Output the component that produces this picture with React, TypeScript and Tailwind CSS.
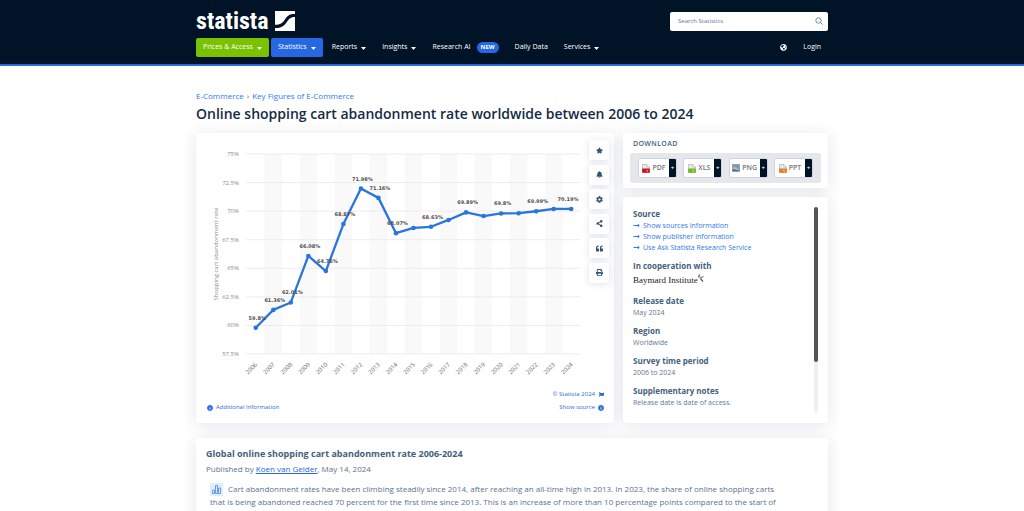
import React from "react";
import {
	FaBell,
	FaCog,
	FaFlag,
	FaGlobeAmericas,
	FaInfoCircle,
	FaLongArrowAltRight,
	FaPrint,
	FaQuoteLeft,
	FaShareAlt,
	FaStar,
} from "react-icons/fa";

interface DataPoint {
	year: number;
	value: number;
	label?: string;
}

const data: DataPoint[] = [
	{ year: 2006, value: 59.8, label: "59.8%" },
	{ year: 2007, value: 61.36, label: "61.36%" },
	{ year: 2008, value: 62.01, label: "62.01%" },
	{ year: 2009, value: 66.08, label: "66.08%" },
	{ year: 2010, value: 64.76, label: "64.76%" },
	{ year: 2011, value: 68.87, label: "68.87%" },
	{ year: 2012, value: 71.98, label: "71.98%" },
	{ year: 2013, value: 71.16, label: "71.16%" },
	{ year: 2014, value: 68.07, label: "68.07%" },
	{ year: 2015, value: 68.53 },
	{ year: 2016, value: 68.63, label: "68.63%" },
	{ year: 2017, value: 69.23 },
	{ year: 2018, value: 69.89, label: "69.89%" },
	{ year: 2019, value: 69.57 },
	{ year: 2020, value: 69.8, label: "69.8%" },
	{ year: 2021, value: 69.82 },
	{ year: 2022, value: 69.99, label: "69.99%" },
	{ year: 2023, value: 70.19 },
	{ year: 2024, value: 70.19, label: "70.19%" },
];

const ticks = [75, 72.5, 70, 67.5, 65, 62.5, 60, 57.5];

const LEFT = 51;
const RIGHT = 384;
const TOP = 21;
const BOTTOM = 221;
const STEP = (RIGHT - LEFT) / data.length;

const xAt = (index: number) => LEFT + STEP * (index + 0.5);
const yAt = (value: number) => TOP + ((75 - value) / 17.5) * (BOTTOM - TOP);

const card = "rounded-[3px] bg-white shadow-[0_2px_16px_rgba(20,40,90,0.12)]";

const Chart: React.FC = () => (
	<svg
		viewBox="0 0 385 248"
		className="block w-full"
		role="img"
		aria-label="Shopping cart abandonment rate by year">
		{data.map((d, i) =>
			i % 2 === 1 ? (
				<rect
					key={d.year}
					x={LEFT + STEP * i}
					y={TOP}
					width={STEP}
					height={BOTTOM - TOP}
					fill="#f9f9f9"
				/>
			) : null,
		)}
		{ticks.map((t) => (
			<g key={t}>
				<line
					x1={LEFT - 1}
					x2={RIGHT}
					y1={yAt(t)}
					y2={yAt(t)}
					stroke="#ececec"
				/>
				<text
					x={43}
					y={yAt(t) + 2}
					textAnchor="end"
					className="fill-[#8c8c8c] text-[6px]">
					{t}%
				</text>
			</g>
		))}
		<text
			transform="translate(22 121) rotate(-90)"
			textAnchor="middle"
			className="fill-[#8c8c8c] text-[6px]">
			Shopping cart abandonment rate
		</text>
		{data.map((d, i) => (
			<text
				key={d.year}
				transform={`translate(${xAt(i) + 2} 232) rotate(-45)`}
				textAnchor="end"
				className="fill-[#6c6c6c] text-[6px]">
				{d.year}
			</text>
		))}
		<polyline
			points={data.map((d, i) => `${xAt(i)},${yAt(d.value)}`).join(" ")}
			fill="none"
			stroke="#2875dd"
			strokeWidth={2.3}
			strokeLinejoin="round"
		/>
		{data.map((d, i) => (
			<circle
				key={d.year}
				cx={xAt(i)}
				cy={yAt(d.value)}
				r={2.3}
				fill="#2875dd"
			/>
		))}
		{data.map((d, i) =>
			d.label ? (
				<text
					key={d.year}
					x={Math.min(xAt(i) + 1.5, RIGHT - 12)}
					y={yAt(d.value) - 8}
					textAnchor="middle"
					className="fill-[#505050] font-['DejaVu_Sans'] text-[5px] font-bold">
					{d.label}
				</text>
			) : null,
		)}
	</svg>
);

const Logo: React.FC = () => (
	<a
		href="#"
		aria-label="statista"
		className="flex h-5 items-center gap-[6px] text-white">
		<span className="font-['Liberation_Sans_Narrow','Roboto_Condensed','Noto_Sans_Condensed',Roboto,sans-serif] text-[24px] leading-5 font-bold">
			statista
		</span>
		<svg viewBox="0 0 20 20" className="size-5">
			<path
				fill="currentColor"
				d="M0 0H20V3C14 3 12.300 5 9.700 8.800C7.500 12.100 5.500 13.800 0 13.800Z"
			/>
			<path
				fill="currentColor"
				d="M20 6V20H0V17C6.500 17 9 15 11.800 11C14.300 7.400 16 6 20 6Z"
			/>
		</svg>
	</a>
);

const Caret: React.FC = () => (
	<svg viewBox="0 0 5 3" className="mt-px h-[3px] w-[5px]">
		<path d="M0 0H5L2.500 3Z" fill="currentColor" />
	</svg>
);

const navItem =
	"flex h-[19px] items-center gap-1 rounded-[2px] px-[7px] text-[7px] text-white";

const Header: React.FC = () => (
	<header className="border-b-2 border-[#2b67dc] bg-[#001327] pt-[11px] pb-[7px]">
		<div className="mx-auto max-w-[632px]">
			<div className="flex items-center justify-between">
				<Logo />
				<form className="flex h-[19px] w-[158px] items-center rounded-[2px] bg-white pr-[5px] pl-2">
					<input
						type="search"
						aria-label="Search Statistics"
						placeholder="Search Statistics"
						className="min-w-0 flex-1 text-[6px] outline-none placeholder:text-[#5a7595]"
					/>
					<button type="submit" aria-label="Search">
						<svg
							viewBox="0 0 8 8"
							className="size-2 text-[#6f8ba6]"
							fill="none"
							stroke="currentColor">
							<circle cx="3.500" cy="3.500" r="2.700" />
							<path d="M5.500 5.500L7.700 7.700" />
						</svg>
					</button>
				</form>
			</div>
			<nav className="mt-[7px] flex items-center gap-[2px]">
				<button className={`${navItem} bg-[#7ac100]`}>
					Prices &amp; Access <Caret />
				</button>
				<button className={`${navItem} bg-[#2667e4]`}>
					Statistics <Caret />
				</button>
				<button className={navItem}>
					Reports <Caret />
				</button>
				<button className={navItem}>
					Insights <Caret />
				</button>
				<a href="#" className={navItem}>
					Research AI
					<span className="ml-[2px] rounded-full bg-[#2667e4] px-1 text-[6px] leading-[11px] font-bold">
						NEW
					</span>
				</a>
				<a href="#" className={navItem}>
					Daily Data
				</a>
				<button className={navItem}>
					Services <Caret />
				</button>
				<button
					aria-label="Language"
					className={`${navItem} ml-auto`}>
					<FaGlobeAmericas size={7} />
				</button>
				<a href="#" className={navItem}>
					Login
				</a>
			</nav>
		</div>
	</header>
);

const tools = [
	{ name: "Favorite", Icon: FaStar },
	{ name: "Notify", Icon: FaBell },
	{ name: "Settings", Icon: FaCog },
	{ name: "Share", Icon: FaShareAlt },
	{ name: "Cite", Icon: FaQuoteLeft },
	{ name: "Print", Icon: FaPrint },
];

const ChartCard: React.FC = () => (
	<section className={`${card} flex min-w-0 flex-1 flex-col`}>
		<div className="flex">
			<div className="min-w-0 flex-1">
				<Chart />
			</div>
			<div className="flex h-[150px] flex-col justify-between pt-[7px] pr-[5px] pl-2">
				{tools.map(({ name, Icon }) => (
					<button
						key={name}
						aria-label={name}
						className="flex size-5 items-center justify-center rounded-[2px] bg-white text-[#34557a] shadow-[0_1px_7px_rgba(20,40,90,0.14)]">
						<Icon size={7} />
					</button>
				))}
			</div>
		</div>
		<div className="flex items-end justify-between pt-[7px] pr-[10px] pb-[9px] pl-[11px] text-[6px] leading-[13px] text-[#2b6be6]">
			<a href="#" className="flex items-center gap-[3px]">
				<FaInfoCircle size={6} />
				Additional Information
			</a>
			<div className="flex flex-col items-end">
				<a href="#" className="flex items-center gap-1">
					© Statista 2024
					<FaFlag size={5} />
				</a>
				<a href="#" className="flex items-center gap-[3px]">
					Show source
					<FaInfoCircle size={6} />
				</a>
			</div>
		</div>
	</section>
);

const FileIcon: React.FC<{ color: string }> = ({ color }) => (
	<svg viewBox="0 0 8 9" className="h-[9px] w-2">
		<path
			d="M0.500 0.500H5L7.500 3V8.500H0.500Z"
			fill="#e9e9e9"
			stroke="#a8a8a8"
			strokeWidth="0.600"
		/>
		<path
			d="M5 0.500V3H7.500"
			fill="#ffffff"
			stroke="#a8a8a8"
			strokeWidth="0.600"
		/>
		<path d="M0.200 4.500H7.800V8.700H0.200Z" fill={color} />
		<path d="M4 6L6 7.500" stroke="#ffffff" strokeWidth="0.700" />
	</svg>
);

const ImageIcon: React.FC = () => (
	<svg viewBox="0 0 8 8" className="size-2">
		<rect width="8" height="8" fill="#9aa4b0" />
		<rect x="1" y="1" width="6" height="6" fill="#5b9be8" />
		<path d="M1 3.500L3 3L4.500 3.500L7 6V7H1Z" fill="#d3bd70" />
		<path d="M1 5L7 6.500V7H1Z" fill="#3f66aa" />
	</svg>
);

const downloads = [
	{ type: "PDF", icon: <FileIcon color="#cf1020" /> },
	{ type: "XLS", icon: <FileIcon color="#6fb81c" /> },
	{ type: "PNG", icon: <ImageIcon /> },
	{ type: "PPT", icon: <FileIcon color="#ee7d1a" /> },
];

const DownloadCard: React.FC = () => (
	<section className={`${card} px-[7px] py-[5px]`}>
		<h2 className="px-[3px] text-[7px] leading-3 font-semibold tracking-wider text-[#455f7c]">
			DOWNLOAD
		</h2>
		<div className="mt-[3px] flex justify-between rounded-[3px] bg-[#e5e7ea] px-2 py-[5px]">
			{downloads.map(({ type, icon }) => (
				<button
					key={type}
					className="flex h-5 w-[39px] items-stretch overflow-hidden rounded-[2px] border border-[#cbd5e2] bg-white text-[7px] font-semibold text-[#777777]">
					<span className="flex flex-1 items-center justify-center gap-[2px]">
						{icon}
						{type}
					</span>
					<span className="flex w-[7px] items-center justify-center bg-[#001327] text-[6px] font-bold text-white">
						+
					</span>
				</button>
			))}
		</div>
	</section>
);

const sourceLinks = [
	"Show sources information",
	"Show publisher information",
	"Use Ask Statista Research Service",
];

const details = [
	{ title: "Release date", text: "May 2024" },
	{ title: "Region", text: "Worldwide" },
	{ title: "Survey time period", text: "2006 to 2024" },
	{ title: "Supplementary notes", text: "Release date is date of access." },
];

const heading = "text-[8px] leading-3 font-bold text-[#455f7c]";

const InfoCard: React.FC = () => (
	<section className={`${card} flex flex-1 justify-between p-[10px]`}>
		<div className="flex flex-col gap-[7px] pt-px text-[7px] leading-[11px] text-[#5f7894]">
			<div>
				<h3 className={heading}>Source</h3>
				<ul>
					{sourceLinks.map((link) => (
						<li key={link}>
							<a
								href="#"
								className="flex items-center gap-[3px] text-[#2f78f0]">
								<FaLongArrowAltRight size={7} />
								{link}
							</a>
						</li>
					))}
				</ul>
			</div>
			<div>
				<h3 className={heading}>In cooperation with</h3>
				<div className="flex h-4 items-center font-['Liberation_Serif',serif] text-[9px] text-[#222222]">
					Baymard Institute
					<svg viewBox="0 0 6 8" className="mb-1 h-2 w-[6px]" fill="none">
						<path d="M0.500 3.500L1.500 0.500" stroke="#c43a3a" strokeWidth="1.300" />
						<path d="M1.500 4L5.500 2.500" stroke="#4e8a5b" strokeWidth="1.200" />
						<path d="M2.500 4.500L5 7.500" stroke="#33618f" strokeWidth="1.200" />
					</svg>
				</div>
			</div>
			{details.map(({ title, text }) => (
				<div key={title}>
					<h3 className={heading}>{title}</h3>
					<p>{text}</p>
				</div>
			))}
		</div>
		<div className="w-1 rounded-full bg-[#eef0f2]">
			<div className="h-3/4 rounded-full bg-[#555555]" />
		</div>
	</section>
);

const Article: React.FC = () => (
	<article
		className={`${card} mt-[15px] px-[10px] pt-[9px] pb-6 text-[8px] leading-[13px] text-[#5a7390]`}>
		<h2 className="text-[9px] leading-[14px] font-bold text-[#455f7c]">
			Global online shopping cart abandonment rate 2006-2024
		</h2>
		<p className="mt-px">
			Published by{" "}
			<a href="#" className="text-[#2667e4] underline">
				Koen van Gelder
			</a>
			, May 14, 2024
		</p>
		<p className="mt-[7px] max-w-[590px] pl-1">
			<span className="-my-px mr-[5px] inline-flex size-[13px] items-center justify-center bg-[#e1edfd] align-middle">
				<svg
					viewBox="0 0 9 9"
					className="size-[9px]"
					fill="none"
					stroke="#5b92f0"
					strokeWidth="0.900">
					<path d="M0.500 5H2.500V8.500H0.500ZM3.500 0.500H5.500V8.500H3.500ZM6.500 3H8.500V8.500H6.500Z" />
				</svg>
			</span>
			Cart abandonment rates have been climbing steadily since 2014, after
			reaching an all-time high in 2013. In 2023, the share of online
			shopping carts
			<br />
			that is being abandoned reached 70 percent for the first time since
			2013. This is an increase of more than 10 percentage points compared
			to the start of
		</p>
	</article>
);

export default function App() {
	return (
		<div className="bg-white font-['Open_Sans',sans-serif]">
			<Header />
			<main className="mx-auto max-w-[632px] pt-6">
				<nav
					aria-label="Breadcrumb"
					className="flex gap-[3px] text-[8px] leading-3 text-[#2f78f0]">
					<a href="#">E-Commerce</a>
					<span className="text-[#455f7c]">›</span>
					<a href="#">Key Figures of E-Commerce</a>
				</nav>
				<h1 className="mt-[2px] text-[14px] leading-5 font-semibold text-[#142b45]">
					Online shopping cart abandonment rate worldwide between 2006
					to 2024
				</h1>
				<div className="mt-[9px] flex gap-[9px]">
					<ChartCard />
					<div className="flex w-[205px] flex-col gap-[9px]">
						<DownloadCard />
						<InfoCard />
					</div>
				</div>
				<Article />
			</main>
		</div>
	);
}
